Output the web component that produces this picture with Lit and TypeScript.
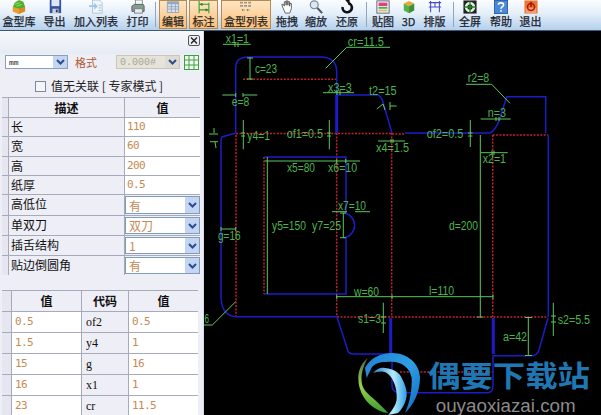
import { LitElement, html, css, svg } from "lit";
import { customElement } from "lit/decorators.js";

type Tool = { label: string; w: number; ml?: number; icon: unknown; on?: boolean };

const icons = {
  lib: svg`<path d="M1 8 L8 6 L15 8 V13 L8 16 L1 13Z" fill="#d98a20"/><path d="M1 8 L3 3 L8 0 L13 2 L15 8 L8 10Z" fill="#4fb030"/><path d="M1 8 L8 10 V16 L1 13Z" fill="#e8a030"/><path d="M3 5 L9 3 M5 7 L11 5" stroke="#a8e070"/>`,
  save: svg`<rect x="2" y="0" width="13" height="15" fill="#3a50a0"/><rect x="4" y="0" width="9" height="7" fill="#dfe6f8"/><rect x="5" y="10" width="7" height="5" fill="#c8d0e0"/><rect x="9" y="11" width="2" height="3" fill="#334"/>`,
  addlist: svg`<path d="M4 0 H12 L15 3 V15 H4Z" fill="#eef5fb" stroke="#a8c0d4"/><path d="M0 6 H6 V3 L10 7 L6 11 V8 H0Z" fill="#9cc8e4"/><path d="M11 6 H14 M11 9 H14 M11 12 H14" stroke="#a0b8d0"/>`,
  print: svg`<rect x="5" y="0" width="8" height="6" fill="#f4f6f4" stroke="#889"/><path d="M1 7 L4 5 H14 L15 7 V13 H1Z" fill="#8a9a90" stroke="#556"/><rect x="4" y="10" width="9" height="5" fill="#e8ece8" stroke="#778"/><rect x="11" y="6" width="3" height="1" fill="#4c4"/>`,
  edit: svg`<rect x="1" y="1" width="14" height="13" fill="#dbe3ee" stroke="#8ca0b8"/><rect x="1" y="1" width="14" height="3" fill="#8fa8c8"/><path d="M6 4 V14 M11 4 V14 M1 7 H15 M1 10 H15" stroke="#8ca0b8"/>`,
  mark: svg`<path d="M2 0 V15 M14 2 V15" stroke="#2c9a30" stroke-width="1.3"/><path d="M2 4 H14 M2 11 H14" stroke="#2c9a30" stroke-width="1.4"/><path d="M3 4 L6 2 V6Z M13 11 L10 9 V13Z" fill="#127a18"/>`,
  boxes: svg`<path d="M1 2 h3 M6 2 h3 M11 2 h3 M1 6 h3 M6 6 h3 M11 6 h3 M3 11 h3 M9 11 h3" stroke="#6a6a6a" stroke-width="2" stroke-dasharray="1.5 .7"/>`,
  hand: svg`<path d="M3 8 L2 5 L4 5 L5 7 V2 H7 V6 V1 H9 V6 V2 H11 V7 V4 H13 V10 L11 15 H6 Z" fill="#fff" stroke="#444" stroke-width=".9"/>`,
  zoom: svg`<circle cx="6" cy="5.5" r="4.5" fill="#dbe9f7" stroke="#7c8a98" stroke-width="1.4"/><path d="M9.5 9 L15 15" stroke="#555" stroke-width="2.4"/>`,
  undo: svg`<path d="M9.5 3.6 A5.3 5.3 0 1 1 3 8" fill="none" stroke="#111" stroke-width="3"/><path d="M6 0 L11 0 V6Z" fill="#111"/>`,
  pic: svg`<rect x="1" y="1" width="14" height="14" fill="#f2f2e8" stroke="#557"/><rect x="3" y="3" width="10" height="4" fill="#e04080"/><rect x="3" y="8" width="10" height="2" fill="#40b060"/><rect x="3" y="11" width="10" height="2" fill="#d8c060"/>`,
  d3: svg`<path d="M2 4 L8 1 L14 4 L8 7Z" fill="#e8a838"/><path d="M2 4 L8 7 V15 L2 12Z" fill="#58b048"/><path d="M14 4 L8 7 V15 L14 12Z" fill="#3c9038"/>`,
  layout: svg`<path d="M1 3 H15 M3 1 V14 M13 1 V14 M1 8 H15 M8 3 V8" stroke="#4a4ac0" stroke-width="1.2" fill="none"/>`,
  full: svg`<rect x="0.5" y="0.5" width="15" height="15" fill="#222"/><circle cx="8" cy="8" r="6" fill="#e0f0e0"/><circle cx="8" cy="8" r="3" fill="#222"/><path d="M8 2 V14 M2 8 H14" stroke="#282" stroke-width="1.5"/>`,
  help: svg`<rect x="0.5" y="0.5" width="15" height="15" fill="#4a88d8" stroke="#2a58a0"/><path d="M5 5.5 C5 2.5 11 2.5 11 5.5 C11 7.5 8 7.5 8 10 M8 11.5 V13.5" fill="none" stroke="#fff" stroke-width="1.8"/>`,
  exit: svg`<rect x="0.5" y="0.5" width="15" height="15" fill="#e87838"/><rect x="2" y="9" width="12" height="6" fill="#f0a070"/><circle cx="8" cy="8" r="4" fill="none" stroke="#b01808" stroke-width="1.8"/><path d="M8 2 V8" stroke="#b01808" stroke-width="2"/>`,
};

const tools: (Tool | "sep")[] = [
  { label: "盒型库", w: 38, icon: icons.lib },
  { label: "导出", w: 33, icon: icons.save },
  { label: "加入列表", w: 50, icon: icons.addlist },
  { label: "打印", w: 33, icon: icons.print },
  "sep",
  { label: "编辑", w: 28, icon: icons.edit, on: true },
  { label: "标注", w: 29, ml: 2, icon: icons.mark, on: true },
  { label: "盒型列表", w: 50, ml: 3, icon: icons.boxes, on: true },
  { label: "拖拽", w: 32, icon: icons.hand },
  { label: "缩放", w: 26, icon: icons.zoom },
  { label: "还原", w: 36, icon: icons.undo },
  "sep",
  { label: "贴图", w: 26, icon: icons.pic },
  { label: "3D", w: 25, icon: icons.d3 },
  { label: "排版", w: 27, icon: icons.layout },
  { label: "", w: 4, icon: null },
  "sep",
  { label: "全屏", w: 26, icon: icons.full },
  { label: "帮助", w: 36, icon: icons.help },
  { label: "退出", w: 23, icon: icons.exit },
];

const blue: string[] = [
  "M235.7 133 V68 Q235.7 57 248 57 H322 Q336.7 58 336.7 72 V133",
  "M235.7 133 L222 137 Q221 138 221 142 V298 Q222 316.7 237 316.7 H337",
  "M264 157 H346 V213 M346 237.7 V294 H264",
  "M344 213 A12.5 12.5 0 0 1 344 237.7",
  "M337 95 H378 Q381 96 383 102 L392 133",
  "M405 133 H490 Q496 130 500 118 L506.7 96.7 H545.7 V133",
  "M548.3 135 V317",
  "M337 317 L348 351 Q349 354 354 354 H390",
  "M533 355.7 Q537 355 539 350 L546 325 Q547 322 548 318",
  "M493.5 355.7 H533",
  "M392 353 V385 Q392 392.7 400 392.7 H488 Q493 392 493 386 V355",
];
const thick: string[] = ["M336.7 95 V133", "M390.7 318 V354", "M493.3 318 V354"];
const red: string[] = [
  "M243 79.3 H336", "M236 133.5 H392", "M392 134 H404", "M492.7 135 H548", "M236 135 V317", "M264 157 V294",
  "M336.7 133 V317", "M391.7 133 V317", "M492.7 135 V317", "M337 317 H548", "M400 372 H493",
];
const green: [number, number, number, number][] = [
  [223, 44.3, 250.7, 44.3], [235, 42, 235, 47], [238, 42, 238, 47],
  [325.7, 68.3, 346.7, 47.3], [346.7, 47.3, 390, 47.3],
  [250, 57.3, 250, 79.3], [247, 58, 253, 58], [247, 79, 253, 79],
  [222.3, 95, 235.7, 95], [243, 95, 257.3, 95], [235.7, 93, 235.7, 97], [243, 93, 243, 97],
  [323, 92.7, 354, 92.7], [337, 90, 337, 95], [340, 90, 340, 95],
  [376.7, 109, 383, 104], [383, 104, 385, 110], [390, 102, 390, 110], [390, 106, 396.7, 106],
  [243.3, 120, 243.3, 149.3], [241, 133, 245, 133], [241, 136, 245, 136],
  [329.3, 120, 329.3, 149.3], [327, 133, 331, 133], [327, 136, 331, 136],
  [209, 134, 218, 134], [214, 128, 214, 133], [210, 141.7, 218, 141.7], [215, 142, 216, 148],
  [378, 141, 405, 141], [391, 139, 391, 143], [393, 139, 393, 143],
  [481, 152.7, 507.7, 152.7], [492, 150.5, 492, 155], [494, 150.5, 494, 155],
  [480.7, 119, 510.7, 119], [496, 117, 496, 121], [499, 117, 499, 121],
  [470.3, 120, 470.3, 147], [468, 133, 472.5, 133], [468, 136, 472.5, 136],
  [466, 84.3, 491.7, 84.3], [491.7, 84.3, 510, 103.3],
  [267.3, 157, 267.3, 294], [264.5, 161, 360, 161], [336.7, 159, 336.7, 163], [345.7, 159, 345.7, 163],
  [332, 211.7, 347, 211.7], [355, 211.7, 370, 211.7], [343.3, 213, 343.3, 237.7], [340, 213, 346, 213], [340, 237.7, 346, 237.7],
  [221, 229, 235.7, 229], [221, 227, 221, 231], [235.7, 227, 235.7, 231],
  [212.3, 325, 235.7, 301.7], [204, 325, 212.3, 325],
  [336, 296.7, 493, 296.7], [392, 294.5, 392, 299], [493, 294.5, 493, 299], [336.7, 294.5, 336.7, 299],
  [480.3, 135, 480.3, 317], [477, 317, 483, 317],
  [528.3, 317, 528.3, 356], [525, 317.5, 532, 317.5], [525, 355.5, 532, 355.5],
  [553.3, 302.7, 553.3, 336], [551, 316, 556, 316], [551, 322, 556, 322],
  [383.3, 302.7, 383.3, 333], [381, 317, 386, 317], [381, 323, 386, 323],
];
const labels: [number, number, number, string][] = [
  [225.7, 249, 39.3, "x1=1"], [347.7, 384, 41.7, "cr=11.5"], [255, 277, 69, "c=23"], [231.7, 249.3, 101.7, "e=8"],
  [328, 351.7, 88.3, "x3=3"], [369, 396.7, 91, "t2=15"], [247.3, 270, 135.7, "y4=1"], [286.7, 323, 134, "of1=0.5"],
  [376, 409, 148, "x4=1.5"], [482.7, 506, 159.3, "x2=1"], [487.7, 506, 113, "n=3"], [426.7, 463.3, 134, "of2=0.5"],
  [467.7, 489.3, 78.3, "r2=8"], [287, 315, 168, "x5=80"], [328, 357, 168, "x6=10"], [338, 366, 206, "x7=10"],
  [272, 306, 226, "y5=150"], [312, 341, 226, "y7=25"], [218, 240.7, 235.7, "g=16"], [354, 379, 291.7, "w=60"],
  [429, 454, 291, "l=110"], [449, 478, 226, "d=200"], [503, 527, 337, "a=42"], [557.7, 590, 320, "s2=5.5"],
  [358, 381, 319, "s1=3"], [204.5, 209, 319, "6"],
];

const descRows = [["长", "110"], ["宽", "60"], ["高", "200"], ["纸厚", "0.5"]];
const selRows = [["高低位", "有"], ["单双刀", "双刀"], ["插舌结构", "1"], ["贴边倒圆角", "有"]];
const valRows = [
  ["0.5", "of2", "0.5"], ["1.5", "y4", "1"], ["15", "g", "16"], ["16", "x1", "1"], ["23", "cr", "11.5"],
];

const chevron = html`<svg viewBox="0 0 9 6" width="9" height="6"><path d="M1 1 L4.5 4.5 L8 1" fill="none" stroke="#2c4c90" stroke-width="2"/></svg>`;

@customElement("app-root")
export class AppRoot extends LitElement {
  static styles = css`
    :host { display: block; width: 601px; height: 415px; overflow: hidden; position: relative;
      font-family: "Noto Sans CJK SC", "Liberation Sans", sans-serif; font-size: 12px; color: #222; }
    .toolbar { display: flex; height: 30px; box-sizing: content-box; border-bottom: 1px solid #3e5a78;
      background: linear-gradient(#fbfdff, #e4eff9 45%, #b4d0ec); }
    .tool { display: flex; flex-direction: column; align-items: center; flex: none; height: 30px; box-sizing: border-box; padding-top: 0; font-size: 11px; line-height: 14px; color: #1a2430; white-space: nowrap; -webkit-text-stroke: 0.25px #1a2430; }
    .tool svg { width: 14px; height: 14px; flex: none; }
    .tool.on { background: linear-gradient(#fde6c4, #fbbf78); border: 1px solid #b98a4e; height: 29px; box-sizing: border-box; color: #3a2a10; }
    .tool.on svg { height: 13px; }
    .sep { flex: none; width: 1px; margin: 2px 3px 3px 1px; background: #8fa6bc; }
    .main { display: flex; height: 384px; }
    .panel { flex: none; width: 204px; height: 384px; overflow: hidden; box-sizing: border-box; background: #eeeef6; border-right: 1px solid #d8d8e6; }
    .head { display: flex; justify-content: flex-end; height: 23px; padding: 4px 3px 0 0; box-sizing: border-box; background: linear-gradient(#f7f9fc, #e6ebf4); }
    .close { width: 12px; height: 11px; box-sizing: border-box; border: 1px solid #555; border-radius: 2px; background: #eef0f4; display: flex; align-items: center; justify-content: center; }
    .controls { display: flex; align-items: flex-start; height: 17px; margin-top: 1px; padding-left: 5px; }
    .select { display: flex; justify-content: space-between; align-items: center; box-sizing: border-box; height: 14px; background: #fff; border: 1px solid #8aa0b8; font-family: "Liberation Mono", monospace; font-size: 8px; padding-left: 3px; }
    .unit { width: 63px; }
    .arrow { display: flex; align-items: center; justify-content: center; width: 14px; height: 12px; background: #c3d5f2; }
    .fmt { width: 21px; margin: 0 20px 0 7px; color: #b05a30; font-size: 11px; line-height: 15px; white-space: nowrap; }
    .dis { width: 64px; background: #e6e4da; border-color: #c8c6ba; color: #a8a698; font-size: 10px; }
    .dis .arrow { background: #dedcd2; }
    .gridicon { margin-left: 4px; width: 15px; height: 15px; }
    .check { display: flex; align-items: center; height: 14px; margin-top: 7px; padding-left: 35px; gap: 5px; white-space: pre; font-size: 12px; line-height: 14px; color: #222; }
    .box { width: 11px; height: 11px; box-sizing: border-box; border: 1px solid #7a8a9a; background: #f4f6f8; }
    .t1, .t2 { display: grid; gap: 1px; margin-left: 2px; background: #a6aaba; border-top: 1px solid #a6aaba; }
    .t1 { width: 198px; margin-top: 4px; grid-template-columns: 6px 115px 75px; grid-template-rows: 19px 18px 19px 18px 18px 20px 19px 19px 19px; }
    .t2 { width: 196px; margin-top: 15px; grid-template-columns: 9px 69px 46px 69px; grid-auto-rows: 20px; }
    .stub { background: #e6e6f0; }
    .th { background: #eeeef6; font-weight: 700; text-align: center; font-size: 12px; line-height: 19px; color: #111; }
    .d { background: #eeeef6; font-size: 12px; line-height: 18px; padding-left: 2px; color: #111; white-space: nowrap; }
    .v { background: #fff; color: #c68a55; font-family: "DejaVu Sans Mono", monospace; font-size: 11px; letter-spacing: -0.6px; line-height: 18px; padding-left: 2px; }
    .t2 .v { line-height: 19px; padding-left: 3px; }
    .code { background: #eeeef6; font-family: "Liberation Serif", serif; font-size: 12px; line-height: 20px; padding-left: 4px; color: #111; }
    .sel { background: #eeeef6; padding: 1px 0; }
    .field { display: flex; align-items: center; justify-content: space-between; height: 100%; box-sizing: border-box; background: #fff; border: 1px solid #7f9db9; padding-left: 3px; color: #c68a55; font-size: 12px; }
    .field .arrow { height: 100%; }
    .canvas { flex: 1; background: #000; min-width: 0; }
    .canvas svg { display: block; width: 397px; height: 384px; }
    .dim { fill: #4cb44c; font-family: "Liberation Sans", sans-serif; font-size: 12px; }
    .cn { fill: #1f78b4; font-family: "Noto Sans CJK SC", sans-serif; font-weight: 700; font-size: 29px; }
    .com { fill: #8b8b8b; font-family: "Liberation Sans", sans-serif; font-size: 17.5px; }
  `;

  private renderCanvas() {
    return html`<svg viewBox="204 31 397 384" xmlns="http://www.w3.org/2000/svg">
      <defs>
        <linearGradient id="g1" x1="0" y1="0" x2="1" y2="1"><stop offset="0" stop-color="#1f7fd0"/><stop offset=".5" stop-color="#2f9ee6"/><stop offset="1" stop-color="#0f6cc0"/></linearGradient>
        <linearGradient id="g2" x1="0" y1="0" x2="1" y2="0"><stop offset="0" stop-color="#1d78c8"/><stop offset=".6" stop-color="#b5ecfc"/><stop offset="1" stop-color="#2f9ee6"/></linearGradient>
        <linearGradient id="g3" x1="0" y1="0" x2="0" y2="1"><stop offset="0" stop-color="#4a6a50"/><stop offset=".5" stop-color="#9ad24a"/><stop offset="1" stop-color="#3a9a30"/></linearGradient>
      </defs>
      ${red.map((d) => svg`<path d=${d} fill="none" stroke="#c4202c" stroke-width="1.5" stroke-dasharray="2 1.4"/>`)}
      ${blue.map((d) => svg`<path d=${d} fill="none" stroke="#1c1cc8" stroke-width="1.5"/>`)}
      ${thick.map((d) => svg`<path d=${d} fill="none" stroke="#1c1cc8" stroke-width="3"/>`)}
      ${green.map(([a, b, c, d]) => svg`<line x1=${a} y1=${b} x2=${c} y2=${d} stroke="#5cc85c" stroke-width="1"/>`)}
      ${labels.map(([a, b, c, t]) => svg`<text class="dim" x=${a} y=${c + 4} textLength=${b - a} lengthAdjust="spacingAndGlyphs">${t}</text>`)}
      <path d="M365 368 C370 358 381 353 392 353 C408 353 420 364 420 378 C420 392 413 406 405 413 C410 402 412 390 411.7 378 C410 368 402 361.7 391.7 361.7 C383 361.7 376 362 372 367 C370 371 368 375 366.7 378Z" fill="url(#g1)"/>
      <path d="M373 373 C376 369 381 367 385 368 C394 369 400 373 401.7 378 C405 384 407 390 406.7 395 C406 403 402 409 398 413 L388.3 415 C393 409 396.7 404 396.7 398 C397 390 395 384 391.7 378 C389 374 386 372 383.3 371.7 C380 371 376 372 373 373Z" fill="url(#g2)"/>
      <path d="M368 358 C362 362 358.3 370 358.3 378 C358.3 392 366 404 378 410 C382 412 385 413 388 413 C384 408 379 404 375 400 C368 394 362 389 361.7 381.7 C361 376 362 372 363.3 368 C364.5 364 366 361 368 358Z" fill="url(#g3)"/>
      <text class="cn" x="428" y="386.5" textLength="162" lengthAdjust="spacingAndGlyphs">偶要下载站</text>
      <text class="com" x="435.7" y="412" textLength="140" lengthAdjust="spacingAndGlyphs">ouyaoxiazai.com</text>
    </svg>`;
  }

  render() {
    return html`
      <div class="toolbar">
        ${tools.map((t) =>
          t === "sep"
            ? html`<div class="sep"></div>`
            : html`<div class="tool ${t.on ? "on" : ""}" style="width:${t.w}px;margin-left:${t.ml ?? 0}px">
                ${t.icon ? html`<svg viewBox="0 0 16 16">${t.icon}</svg>${t.label}` : ""}
              </div>`
        )}
      </div>
      <div class="main">
        <div class="panel">
          <div class="head"><div class="close"><svg viewBox="0 0 8 7" width="8" height="7"><path d="M1 0.5 L7 6.5 M7 0.5 L1 6.5" stroke="#222" stroke-width="1.4"/></svg></div></div>
          <div class="controls">
            <div class="select unit">mm<span class="arrow">${chevron}</span></div>
            <div class="fmt">格式</div>
            <div class="select dis">0.000#<span class="arrow">${chevron}</span></div>
            <svg class="gridicon" viewBox="0 0 15 15"><rect x=".5" y=".5" width="14" height="14" fill="#f4fbf0" stroke="#3aa040"/><path d="M5 .5 V14.5 M10 .5 V14.5 M.5 5 H14.5 M.5 10 H14.5" stroke="#3aa040"/></svg>
          </div>
          <div class="check"><div class="box"></div>值无关联 [ 专家模式 ]</div>
          <div class="t1">
            <div class="stub"></div><div class="th">描述</div><div class="th">值</div>
            ${descRows.map(([a, b]) => html`<div class="stub"></div><div class="d">${a}</div><div class="v">${b}</div>`)}
            ${selRows.map(([a, b]) => html`<div class="stub"></div><div class="d">${a}</div><div class="sel"><div class="field">${b}<span class="arrow">${chevron}</span></div></div>`)}
          </div>
          <div class="t2">
            <div class="stub"></div><div class="th">值</div><div class="th">代码</div><div class="th">值</div>
            ${valRows.map(([a, c, b]) => html`<div class="stub"></div><div class="v">${a}</div><div class="code">${c}</div><div class="v">${b}</div>`)}
          </div>
        </div>
        <div class="canvas">${this.renderCanvas()}</div>
      </div>
    `;
  }
}
